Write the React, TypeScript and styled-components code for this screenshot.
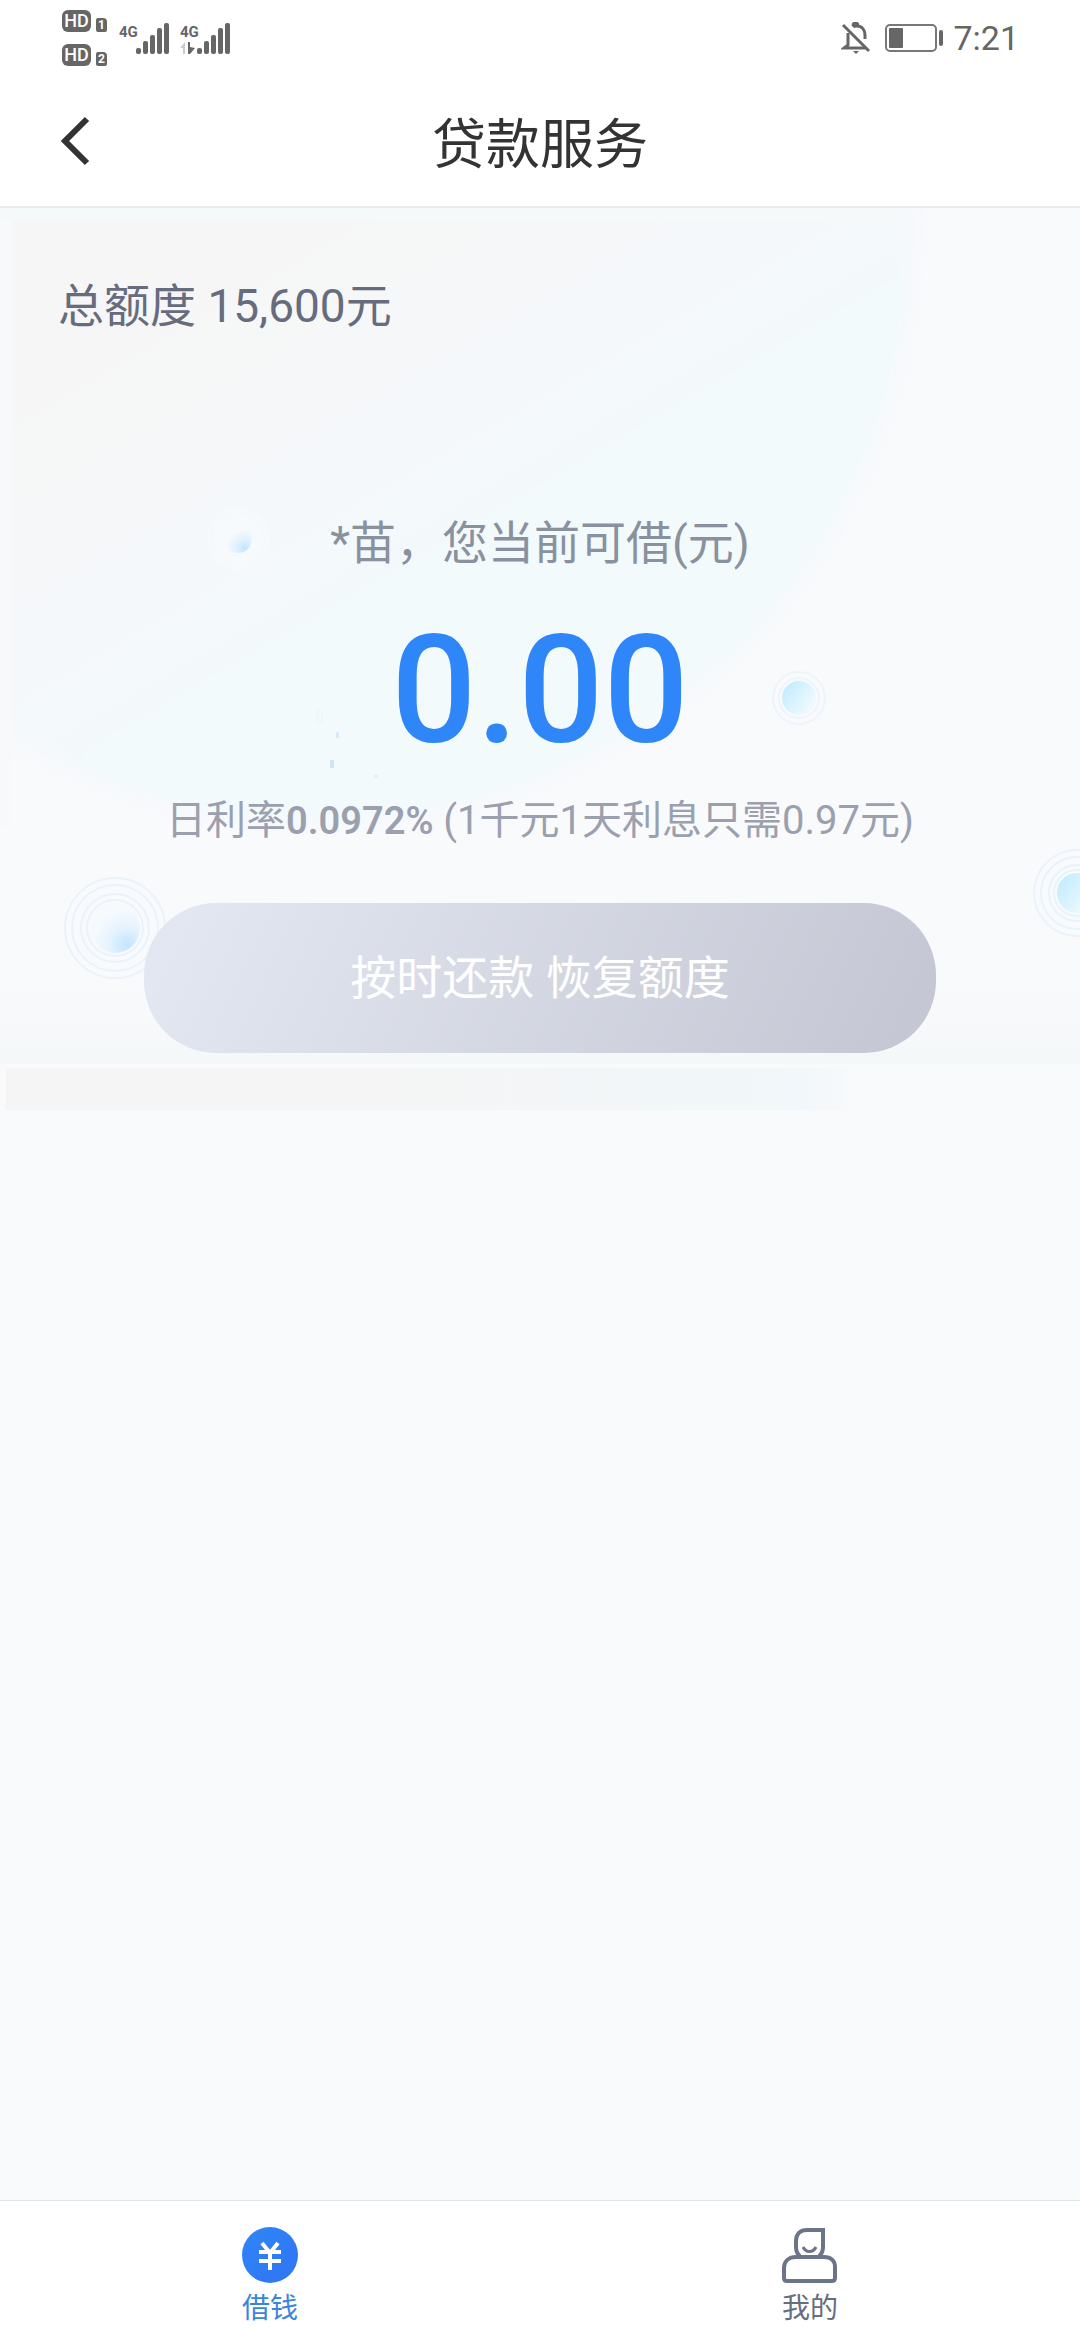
import React from 'react';
import styled, { createGlobalStyle } from 'styled-components';

const GlobalStyle = createGlobalStyle`
  *, *::before, *::after { box-sizing: border-box; }
  body {
    margin: 0;
    background: #f9fafc;
    font-family: Roboto, "Noto Sans CJK SC", sans-serif;
  }
  h1, p { margin: 0; font-weight: 400; }
`;

const Screen = styled.div`
  display: flex;
  flex-direction: column;
  min-height: 100vh;
  background: #f9fafc;
`;

const StatusBar = styled.div`
  display: flex;
  align-items: center;
  justify-content: space-between;
  height: 76px;
  padding: 0 61px 0 62px;
  background: #fff;
  color: #666;
`;

const StatusGroup = styled.div<{ $gap: number }>`
  display: flex;
  align-items: center;
  gap: ${(p) => p.$gap}px;
`;

const SimList = styled.div`
  display: grid;
  row-gap: 12px;
`;

const SimRow = styled.div`
  display: flex;
  align-items: flex-end;
  gap: 5px;
`;

const HdBadge = styled.span`
  width: 29px;
  height: 22px;
  border-radius: 6px;
  background: #666;
  color: #fff;
  font-size: 18px;
  line-height: 22px;
  font-weight: 500;
  text-align: center;
`;

const SimBadge = styled.span`
  width: 11px;
  height: 14px;
  border-radius: 2px 4px 2px 2px;
  background: #666;
  color: #fff;
  font-size: 12px;
  line-height: 14px;
  font-weight: 700;
  text-align: center;
`;

const Clock = styled.span`
  font-size: 34px;
  line-height: 40px;
`;

const StatusIcon = styled.svg`
  display: block;
`;

const Header = styled.header`
  display: grid;
  grid-template-columns: 150px 1fr 150px;
  align-items: center;
  height: 132px;
  background: #fff;
  border-bottom: 2px solid #e8eaec;
`;

const BackButton = styled.button`
  display: flex;
  align-items: center;
  height: 100%;
  padding: 0 0 0 60px;
  border: 0;
  background: none;
`;

const Title = styled.h1`
  padding-top: 10px;
  color: #333;
  font-size: 54px;
  line-height: 64px;
  text-align: center;
`;

const Hero = styled.section`
  position: relative;
  isolation: isolate;
  overflow: hidden;
  display: flex;
  flex-direction: column;
  align-items: center;
  padding: 66px 58px 57px;
`;

const Backdrop = styled.svg`
  position: absolute;
  inset: 0;
  z-index: -1;
  width: 100%;
  height: 100%;
`;

const TotalLimit = styled.p`
  align-self: flex-start;
  color: #666c7e;
  font-size: 46px;
  line-height: 64px;
`;

const Greeting = styled.p`
  margin-top: 173px;
  color: #89919f;
  font-size: 46px;
  line-height: 64px;
`;

const Amount = styled.p`
  margin-top: 42px;
  color: #2e86f8;
  font-size: 150px;
  line-height: 148px;
  font-weight: 500;
`;

const Rate = styled.p`
  margin-top: 32px;
  color: #9ba0ae;
  font-size: 40px;
  line-height: 48px;
`;

const RateValue = styled.strong`
  font-size: 38px;
  font-weight: 600;
`;

const RepayButton = styled.button`
  width: 100%;
  max-width: 792px;
  height: 150px;
  margin-top: 58px;
  border: 0;
  border-radius: 72px;
  background: linear-gradient(115deg, #e3e7f1 5%, #c5c8d4 95%);
  color: #fff;
  font-family: inherit;
  font-size: 46px;
  line-height: 64px;
`;

const TabBar = styled.nav`
  display: grid;
  grid-template-columns: 1fr 1fr;
  height: 140px;
  margin-top: auto;
  background: #fff;
  border-top: 1px solid #e2e4e8;
`;

const Tab = styled.a<{ $active?: boolean }>`
  display: flex;
  flex-direction: column;
  align-items: center;
  gap: 8px;
  padding-top: 26px;
  color: ${(p) => (p.$active ? '#3b84dc' : '#666d80')};
  font-size: 28px;
  line-height: 36px;
  text-decoration: none;
`;

const Signal = ({ transferring = false }: { transferring?: boolean }) => (
  <StatusIcon width="51" height="32" viewBox="0 0 51 32" fill="#666">
    <text x="0" y="15" fontSize="15" fontWeight="700" fontFamily="Roboto, sans-serif">
      4G
    </text>
    <rect x="17" y="26" width="5" height="6" rx="2" />
    <rect x="24" y="19" width="5" height="13" rx="2" />
    <rect x="31" y="13" width="5" height="19" rx="2" />
    <rect x="38" y="6" width="5" height="26" rx="2" />
    <rect x="45" y="1" width="5" height="31" rx="2" />
    {transferring && (
      <>
        <path d="M0 26l5-6v12H3v-6z" fill="#ccc" />
        <path d="M8 20h2v5l5 1-5 6H8z" />
      </>
    )}
  </StatusIcon>
);

type BubbleProps = {
  x: number;
  y: number;
  core: number;
  fill: string;
  rings: number[];
  stroke: string;
};

const Bubble = ({ x, y, core, fill, rings, stroke }: BubbleProps) => (
  <g>
    {rings.map((r) => (
      <circle key={r} cx={x} cy={y} r={r} fill="#fafcfe" fillOpacity="0.3" stroke={stroke} strokeWidth="2" />
    ))}
    <circle cx={x} cy={y} r={core} fill={`url(#${fill})`} />
  </g>
);

const HeroBackdrop = () => (
  <Backdrop viewBox="0 0 1080 903" preserveAspectRatio="xMidYMin slice" aria-hidden="true">
    <defs>
      <linearGradient id="disc" gradientUnits="userSpaceOnUse" x1="120" y1="60" x2="400" y2="540">
        <stop offset="0" stopColor="#f6f6f6" />
        <stop offset="0.2" stopColor="#f6f7f7" />
        <stop offset="0.5" stopColor="#f5f8fa" />
        <stop offset="0.85" stopColor="#f2fafc" />
      </linearGradient>
      <linearGradient id="strip" x1="0" y1="0" x2="1" y2="0">
        <stop offset="0.45" stopColor="#f5f5f5" />
        <stop offset="0.72" stopColor="#f2f6f8" />
        <stop offset="0.93" stopColor="#f1f7fa" />
        <stop offset="1" stopColor="#f9fafc" />
      </linearGradient>
      <linearGradient id="haze" x1="0" y1="0" x2="0" y2="1">
        <stop offset="0" stopColor="#f5f8f9" stopOpacity="0" />
        <stop offset="1" stopColor="#f5f8f9" />
      </linearGradient>
      <radialGradient id="drop" cx="0.75" cy="0.85" r="0.7">
        <stop offset="0" stopColor="#c3e4ff" />
        <stop offset="0.5" stopColor="#e3f2fe" />
        <stop offset="1" stopColor="#f6fafd" />
      </radialGradient>
      <linearGradient id="glow" x1="0.1" y1="0.2" x2="0.9" y2="0.8">
        <stop offset="0" stopColor="#c5edfd" />
        <stop offset="1" stopColor="#f2fafd" />
      </linearGradient>
      <filter id="soft" x="-5%" y="-5%" width="110%" height="110%">
        <feGaussianBlur stdDeviation="6" />
      </filter>
    </defs>
    <rect width="1080" height="903" fill="#f9fafc" />
    <rect y="760" width="1080" height="96" fill="url(#haze)" />
    <g filter="url(#soft)">
      <circle cx="320" cy="22" r="606" fill="#f7f9fc" />
      <circle cx="320" cy="22" r="588" fill="url(#disc)" />
    </g>
    <rect width="12" height="620" fill="#f7f9fa" />
    <rect width="900" height="12" fill="#f6f9f9" />
    <rect x="6" y="860" width="854" height="43" fill="url(#strip)" />
    <Bubble x={238} y={331} core={14} fill="drop" rings={[30, 24]} stroke="#f6fafd" />
    <Bubble x={799} y={490} core={17} fill="glow" rings={[26, 20]} stroke="#edf5fa" />
    <Bubble x={115} y={720} core={25} fill="drop" rings={[50, 43, 34, 28]} stroke="#ebf3fa" />
    <Bubble x={1077} y={685} core={20} fill="glow" rings={[43, 36, 28, 23]} stroke="#e8f4fa" />
    <rect x="317" y="503" width="5" height="12" rx="2" fill="none" stroke="#eaf4f7" />
    <rect x="336" y="524" width="3" height="6" fill="#d8e9f8" />
    <rect x="330" y="552" width="4" height="8" fill="#cfe4fa" />
    <rect x="374" y="567" width="4" height="3" fill="#e6f0f4" />
  </Backdrop>
);

export default function App() {
  return (
    <Screen>
      <GlobalStyle />
      <StatusBar>
        <StatusGroup $gap={12}>
          <SimList>
            {[1, 2].map((n) => (
              <SimRow key={n}>
                <HdBadge>HD</HdBadge>
                <SimBadge>{n}</SimBadge>
              </SimRow>
            ))}
          </SimList>
          <StatusGroup $gap={10}>
            <Signal />
            <Signal transferring />
          </StatusGroup>
        </StatusGroup>
        <StatusGroup $gap={9}>
          <StatusIcon width="35" height="32" viewBox="0 0 35 32" fill="none" stroke="#666" strokeWidth="3">
            <path d="M7 11v12l-4 3h22M12 5c1-1 2-1 4-1 5 0 8 4 8 9v4M12 4c0-4 5-4 5 0" />
            <path d="M2 3l26 26" />
            <path d="M12 29h6l-3 3z" fill="#666" stroke="none" />
          </StatusIcon>
          <StatusIcon width="59" height="28" viewBox="0 0 59 28">
            <rect x="1" y="1" width="50" height="26" rx="4" fill="none" stroke="#777" strokeWidth="2" />
            <rect x="4" y="4" width="14" height="20" rx="1" fill="#666" />
            <rect x="54" y="6" width="4" height="16" rx="2" fill="#666" />
          </StatusIcon>
          <Clock>7:21</Clock>
        </StatusGroup>
      </StatusBar>
      <Header>
        <BackButton type="button" aria-label="返回">
          <StatusIcon width="30" height="50" viewBox="0 0 30 50" fill="none" stroke="#333" strokeWidth="6">
            <path d="M27 3L5 25l22 22" />
          </StatusIcon>
        </BackButton>
        <Title>贷款服务</Title>
      </Header>
      <Hero>
        <HeroBackdrop />
        <TotalLimit>总额度 15,600元</TotalLimit>
        <Greeting>*苗，您当前可借(元)</Greeting>
        <Amount>0.00</Amount>
        <Rate>
          日利率<RateValue>0.0972%</RateValue> (1千元1天利息只需0.97元)
        </Rate>
        <RepayButton type="button">按时还款 恢复额度</RepayButton>
      </Hero>
      <TabBar>
        <Tab href="#loan" $active>
          <StatusIcon width="56" height="56" viewBox="0 0 56 56">
            <defs>
              <linearGradient id="coin" x1="0" y1="0" x2="1" y2="1">
                <stop offset="0" stopColor="#2f86f8" />
                <stop offset="1" stopColor="#2f74f2" />
              </linearGradient>
            </defs>
            <circle cx="28" cy="28" r="28" fill="url(#coin)" />
            <path d="M20 16l8 10 8-10M17 25h22M17 34h22M28 25v18" fill="none" stroke="#fff" strokeWidth="4" />
          </StatusIcon>
          借钱
        </Tab>
        <Tab href="#mine">
          <StatusIcon width="56" height="56" viewBox="0 0 56 56" fill="none" stroke="#6b7488" strokeWidth="4">
            <path d="M18 29c-3-2-4-5-4-9v-6c0-7 4-11 11-11h16v17c0 4-1 7-4 9" />
            <path d="M14 30h28c7 0 11 4 11 10v11c0 2-1 3-3 3H5c-2 0-3-1-3-3V41c0-7 5-11 12-11z" />
            <path d="M21 20c3 6 10 6 13 0" strokeWidth="3" />
          </StatusIcon>
          我的
        </Tab>
      </TabBar>
    </Screen>
  );
}
